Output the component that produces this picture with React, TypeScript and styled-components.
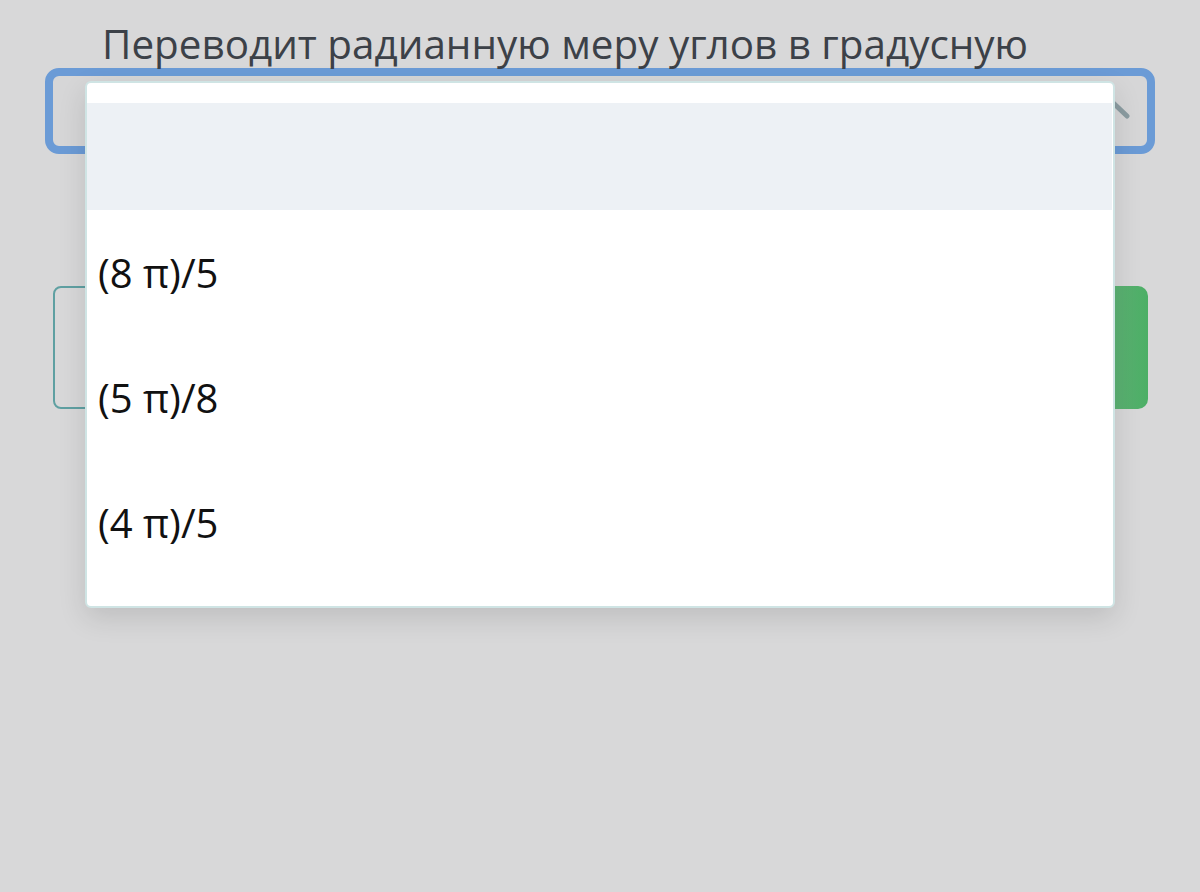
import React from 'react'
import styled, { createGlobalStyle } from 'styled-components'

const options = ['', '(8 π)/5', '(5 π)/8', '(4 π)/5']

export default function App() {
  return (
    <Page>
      <Global />
      <Question>
        <Title>Переводит радианную меру углов в градусную</Title>
        <SelectBox>
          <Chevron viewBox="0 0 44 24" width="44" height="24">
            <path d="M3 21 L22 3 L41 21" fill="none" stroke="#8b9ca1" strokeWidth="5" strokeLinecap="round" />
          </Chevron>
        </SelectBox>
        <AnswerRow>
          <AnswerField />
          <CheckButton />
        </AnswerRow>
        <Dropdown>
          {options.map((opt, idx) => (
            <Option key={idx} $active={idx === 0} $empty={opt === ''}>
              {opt}
            </Option>
          ))}
        </Dropdown>
      </Question>
    </Page>
  )
}

const Global = createGlobalStyle`
  * {
    box-sizing: border-box;
  }

  html, body, #root {
    margin: 0;
    padding: 0;
    font-family: 'Open Sans', 'Noto Sans', sans-serif;
    background: #d8d8d9;
  }
`

const Page = styled.div`
  min-height: 892px;
  padding: 19px 45px 0 45px;
  background: #d8d8d9;
`

const Question = styled.div`
  position: relative;
`

const Title = styled.div`
  padding-left: 57px;
  font-size: 40.4px;
  line-height: 49px;
  color: #3c4148;
  white-space: nowrap;
`

const SelectBox = styled.div`
  height: 86px;
  border: 8px solid #6b9bd6;
  border-radius: 14px;
  background: #d6d6d7;
  display: flex;
  align-items: center;
  justify-content: flex-end;
  padding-right: 17px;
`

const Chevron = styled.svg`
  display: block;
  margin-top: -8px;
`

const AnswerRow = styled.div`
  display: flex;
  gap: 16px;
  margin: 132px 7px 0 8px;
  height: 123px;
`

const AnswerField = styled.div`
  flex: 1;
  border: 2px solid #5fa0a2;
  border-radius: 8px;
`

const CheckButton = styled.div`
  width: 140px;
  border-radius: 10px;
  background: linear-gradient(90deg, #a6c4b0 0%, #7db78e 30%, #4caf66 100%);
`

const Dropdown = styled.div`
  position: absolute;
  left: 40px;
  top: 62px;
  width: 1030px;
  height: 527px;
  background: #ffffff;
  border: 2px solid #cfe4e4;
  border-radius: 6px;
  box-shadow: 0 10px 28px rgba(0, 0, 0, 0.12);
  padding: 20px 1px 0 0;
`

const Option = styled.div<{ $active: boolean; $empty: boolean }>`
  height: ${(p) => (p.$empty ? '107px' : '125px')};
  display: flex;
  align-items: center;
  padding-left: 11px;
  font-size: 40px;
  color: #111111;
  background: ${(p) => (p.$active ? '#edf1f5' : 'transparent')};
`
